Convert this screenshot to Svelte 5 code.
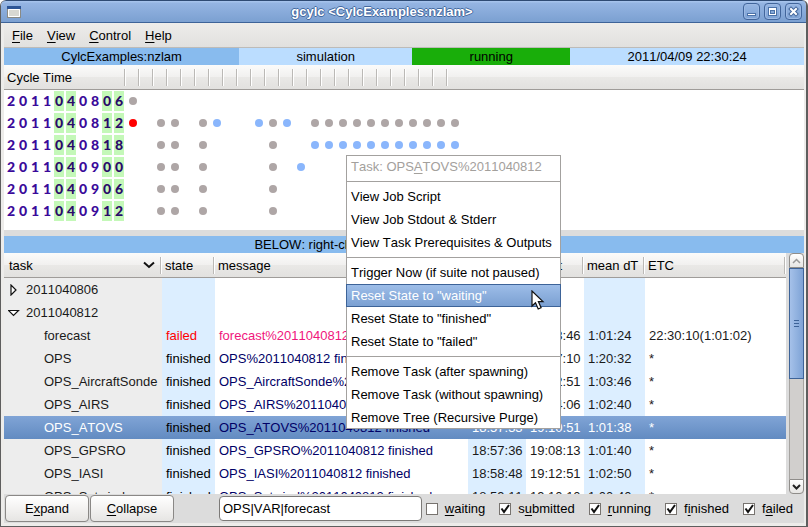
<script>
  const columns = Array.from({ length: 24 }, (_, i) => i);
  const late = Array.from({ length: 11 }, (_, i) => i + 13);
  const cycles = [
    { time: '2011040806', grey: [0], blue: [], red: [] },
    { time: '2011040812', grey: [2, 3, 5, 10, ...late], blue: [6, 9, 11], red: [0] },
    { time: '2011040818', grey: [2, 3, 5, 10], blue: late, red: [] },
    { time: '2011040900', grey: [2, 3, 5, 10], blue: [12], red: [] },
    { time: '2011040906', grey: [2, 3, 5, 10], blue: [], red: [] },
    { time: '2011040912', grey: [2, 3, 5, 10], blue: [], red: [] }
  ];
  const marked = [4, 5, 8, 9];

  function dot(cycle, i) {
    if (cycle.red.includes(i)) return 'red';
    if (cycle.blue.includes(i)) return 'blue';
    if (cycle.grey.includes(i)) return 'grey';
    return '';
  }

  const tasks = [
    { name: 'forecast', state: 'failed', message: 'forecast%2011040812 failed', submit: '21:29:08', start: '21:28:46', mean: '1:01:24', etc: '22:30:10(1:01:02)' },
    { name: 'OPS', state: 'finished', message: 'OPS%2011040812 finished', submit: '18:56:50', start: '19:17:10', mean: '1:20:32', etc: '*' },
    { name: 'OPS_AircraftSonde', state: 'finished', message: 'OPS_AircraftSonde%2011040812 finished', submit: '18:57:05', start: '19:12:51', mean: '1:03:46', etc: '*' },
    { name: 'OPS_AIRS', state: 'finished', message: 'OPS_AIRS%2011040812 finished', submit: '18:57:20', start: '19:14:06', mean: '1:02:40', etc: '*' },
    { name: 'OPS_ATOVS', state: 'finished', message: 'OPS_ATOVS%2011040812 finished', submit: '18:57:33', start: '19:10:51', mean: '1:01:38', etc: '*', selected: true },
    { name: 'OPS_GPSRO', state: 'finished', message: 'OPS_GPSRO%2011040812 finished', submit: '18:57:36', start: '19:08:13', mean: '1:01:40', etc: '*' },
    { name: 'OPS_IASI', state: 'finished', message: 'OPS_IASI%2011040812 finished', submit: '18:58:48', start: '19:12:51', mean: '1:02:50', etc: '*' },
    { name: 'OPS_Satwind', state: 'finished', message: 'OPS_Satwind%2011040812 finished', submit: '18:59:11', start: '19:10:10', mean: '1:00:40', etc: '*' }
  ];

  const filters = [
    { pre: '', key: 'w', post: 'aiting', on: false },
    { pre: 's', key: 'u', post: 'bmitted', on: true },
    { pre: '', key: 'r', post: 'unning', on: true },
    { pre: 'f', key: 'i', post: 'nished', on: true },
    { pre: 'f', key: 'a', post: 'iled', on: true }
  ];

  const groups = [
    ['View Job Script', 'View Job Stdout & Stderr', 'View Task Prerequisites & Outputs'],
    ['Trigger Now (if suite not paused)', 'Reset State to "waiting"', 'Reset State to "finished"', 'Reset State to "failed"'],
    ['Remove Task (after spawning)', 'Remove Task (without spawning)', 'Remove Tree (Recursive Purge)']
  ];
</script>

<div class="window">
  <header class="titlebar">
    <svg class="appicon" width="14" height="12" viewBox="0 0 14 12">
      <rect x=".5" y=".5" width="13" height="11" fill="#d8d8d2" stroke="#8a8a84" />
      <rect x="0" y="0" width="14" height="3" fill="#2c5596" />
      <path d="M1.500 10.500v-7h11v7z" fill="none" stroke="#fff" />
    </svg>
    <h1>gcylc &lt;CylcExamples:nzlam&gt;</h1>
    <div class="wbtns">
      <button aria-label="Minimize"><svg width="15" height="15"><rect x="3.500" y="9.500" width="8" height="2" fill="#fff" stroke="#4c72a8" /></svg></button>
      <button aria-label="Maximize"><svg width="15" height="15"><rect x="3.500" y="3.500" width="8" height="8" fill="#fff" stroke="#4c72a8" /><rect x="5.500" y="6.500" width="4" height="3" fill="#86a9d8" stroke="#4c72a8" /></svg></button>
      <button aria-label="Close"><svg width="15" height="15"><path d="M5 5l5 5M10 5l-5 5" stroke="#41659b" stroke-width="4" stroke-linecap="square" /><path d="M5 5l5 5M10 5l-5 5" stroke="#fff" stroke-width="2" stroke-linecap="square" /></svg></button>
    </div>
  </header>

  <div class="content">
    <nav class="menubar">
      <button><u>F</u>ile</button>
      <button><u>V</u>iew</button>
      <button><u>C</u>ontrol</button>
      <button><u>H</u>elp</button>
    </nav>

    <div class="status">
      <span class="suite">CylcExamples:nzlam</span>
      <span>simulation</span>
      <span class="running">running</span>
      <span>2011/04/09 22:30:24</span>
    </div>

    <div class="matrix">
      <table>
        <colgroup>
          <col class="c-time" />
          {#each columns as c}<col class={c < 23 ? 'c-dot' : ''} />{/each}
        </colgroup>
        <thead>
          <tr>
            <th>Cycle Time</th>
            {#each columns as c}<th></th>{/each}
          </tr>
        </thead>
        <tbody>
          {#each cycles as cycle}
            <tr>
              <td>
                <div class="digits">
                  {#each cycle.time as d, i}<span class:marked={marked.includes(i)}>{d}</span>{/each}
                </div>
              </td>
              {#each columns as c}
                <td>{#if dot(cycle, c)}<i class="dot {dot(cycle, c)}"></i>{/if}</td>
              {/each}
            </tr>
          {/each}
        </tbody>
      </table>
    </div>

    <div class="below">BELOW: right-click on tasks to control or interrogate</div>

    <div class="treebox">
      <div class="tree">
        <table>
          <colgroup>
            <col class="t-task" /><col class="t-state" /><col /><col class="t-time" /><col class="t-time" /><col class="t-mean" /><col class="t-etc" />
          </colgroup>
          <thead>
            <tr>
              <th>
                <div class="sort">task
                  <svg width="12" height="8" viewBox="0 0 12 8"><path d="M1 1.500L6 6l5-4.500" fill="none" stroke="#111" stroke-width="2" /></svg>
                </div>
              </th>
              <th>state</th><th>message</th><th>Tsubmit</th><th>Tstart</th><th>mean dT</th><th>ETC</th>
            </tr>
          </thead>
          <tbody>
            <tr>
              <td>
                <div class="parent"><svg width="12" height="12" viewBox="0 0 12 12"><path d="M3 1v10l5-5z" fill="#fff" stroke="#111" stroke-width="1.200" /></svg>2011040806</div>
              </td>
              <td></td><td></td><td></td><td></td><td></td><td></td>
            </tr>
            <tr>
              <td>
                <div class="parent"><svg width="12" height="12" viewBox="0 0 12 12"><path d="M-1 3.500H9l-5 5z" fill="#fff" stroke="#111" stroke-width="1.200" overflow="visible" transform="translate(1.500 0)" /></svg>2011040812</div>
              </td>
              <td></td><td></td><td></td><td></td><td></td><td></td>
            </tr>
            {#each tasks as t}
              <tr class:selected={t.selected} class:failed={t.state === 'failed'}>
                <td class="child">{t.name}</td>
                <td>{t.state}</td>
                <td>{t.message}</td>
                <td>{t.submit}</td>
                <td>{t.start}</td>
                <td>{t.mean}</td>
                <td>{t.etc}</td>
              </tr>
            {/each}
          </tbody>
        </table>
      </div>
      <div class="scrollbar">
        <button aria-label="Scroll up"><svg width="9" height="6"><path d="M1 5l3.500-3.500L8 5" fill="none" stroke="#999" stroke-width="1.500" /></svg></button>
        <div class="thumb"><i></i><i></i><i></i></div>
        <div class="track"></div>
        <button aria-label="Scroll down"><svg width="9" height="6"><path d="M1 1l3.500 3.500L8 1" fill="none" stroke="#222" stroke-width="2" /></svg></button>
      </div>
    </div>

    <footer>
      <button class="push">E<u>x</u>pand</button>
      <button class="push"><u>C</u>ollapse</button>
      <input class="filter" type="text" aria-label="Task filter" value="OPS|VAR|forecast" />
      <div class="checks">
        {#each filters as f}
          <label>
            <span class="box">
              <input type="checkbox" checked={f.on} />
              <svg width="12" height="12" viewBox="0 0 12 12"><path d="M2.500 5.500L5 9l5-7" fill="none" stroke="#111" stroke-width="2" /></svg>
            </span>
            <span>{f.pre}<u>{f.key}</u>{f.post}</span>
          </label>
        {/each}
      </div>
    </footer>
  </div>

  <div class="popup" role="menu">
    <div class="heading">Task: OPS<u>A</u>TOVS%2011040812</div>
    {#each groups as group}
      <hr />
      {#each group as item}
        <button role="menuitem" class:active={item.includes('waiting')}>{item}</button>
      {/each}
    {/each}
  </div>

  <svg class="pointer" width="14" height="21" viewBox="0 0 14 21">
    <path d="M1 1v15l3.500-3.300 2.700 6.300 2.900-1.200-2.700-6.200H12z" fill="#fff" stroke="#111" stroke-width="1.200" />
  </svg>
</div>

<style>
  :global(body) {
    background: #fff;
  }
  .window,
  .window button,
  .window input {
    font: 13px/17px "Liberation Sans", Arial, sans-serif;
    font-kerning: none;
    color: #000;
  }
  .window {
    position: relative;
    display: flex;
    flex-direction: column;
    box-sizing: border-box;
    height: 100vh;
    border: 1px solid #5e5e5e;
    border-right-width: 2px;
    border-top: 0;
    border-radius: 6px 6px 0 0;
    background: #edecea;
    overflow: hidden;
  }
  .window button {
    margin: 0;
    padding: 0;
    border: 0;
    background: none;
  }
  u {
    text-underline-offset: 2px;
  }

  .titlebar {
    display: flex;
    align-items: center;
    box-sizing: border-box;
    flex: none;
    height: 23px;
    margin: 0 -2px 0 -1px;
    padding: 0 6px 0 7px;
    border: 1px solid #3d6398;
    border-top-color: #2e4a73;
    border-width: 1px 0;
    border-radius: 6px 6px 0 0;
    background: linear-gradient(#a9c6ee, #94b4e2 12%, #7ba0d1);
  }
  .appicon {
    flex: none;
  }
  h1 {
    flex: 1;
    margin: 0;
    font-size: 13px;
    line-height: 17px;
    text-align: center;
    color: #fff;
    text-shadow: 1px 0 #44699f, -1px 0 #44699f, 0 1px #44699f, 0 -1px #44699f;
  }
  .wbtns {
    display: flex;
    gap: 4px;
  }
  .wbtns button {
    width: 17px;
    height: 17px;
    border: 1px solid #41659b;
    border-radius: 4px;
    background: linear-gradient(#96b6e3, #7ea2d4);
    box-shadow: inset 0 0 0 1px #9dbae4;
  }
  .wbtns svg {
    display: block;
  }

  .content {
    display: flex;
    flex-direction: column;
    flex: 1;
    min-height: 0;
    margin: 0 2px 3px 3px;
    background: #dcdcdc;
  }
  .menubar {
    display: flex;
    gap: 14px;
    box-sizing: border-box;
    height: 25px;
    padding: 0 8px;
    border-bottom: 1px solid #bdbbb8;
    background: linear-gradient(#edecea, #e1e0de);
  }
  .status {
    display: flex;
    height: 17px;
  }
  .status span {
    flex: 1 1 auto;
    text-align: center;
    background: #bbddff;
  }
  .status .suite {
    background: #88bbee;
  }
  .status .running {
    background: #19ae0a;
  }

  table {
    width: 100%;
    table-layout: fixed;
    border-collapse: separate;
    border-spacing: 0;
  }
  th,
  td {
    padding: 0;
    text-align: left;
    white-space: nowrap;
    font-weight: normal;
  }
  th {
    box-sizing: border-box;
    height: 25px;
    border-bottom: 1px solid #9f9c99;
    background:
      linear-gradient(#bbb9b6, #bbb9b6) right 1px top 4px / 1px 17px no-repeat,
      linear-gradient(#fff, #fff) right 0 top 4px / 1px 17px no-repeat,
      linear-gradient(#fbfbfa, #f1f0ef 50%, #e9e8e6 52%, #e2e1df);
  }

  .matrix {
    padding-bottom: 8px;
    background: #fff;
  }
  .matrix th {
    padding-left: 3px;
  }
  .matrix th:last-child {
    background: linear-gradient(#fbfbfa, #f1f0ef 50%, #e9e8e6 52%, #e2e1df);
  }
  .c-time {
    width: 122px;
  }
  .c-dot {
    width: 14px;
  }
  .matrix td {
    height: 22px;
  }
  .digits {
    display: flex;
    gap: 2px;
    padding-left: 2px;
    font: 900 14px/20px Lato, "Liberation Sans", sans-serif;
    color: #3a0a9a;
  }
  .digits span {
    width: 10px;
    text-align: center;
  }
  .digits .marked {
    background: #c4f8b8;
    color: #2a0a6a;
  }
  .dot {
    display: block;
    width: 8px;
    height: 8px;
    margin-left: 3px;
    border-radius: 50%;
  }
  .dot.grey {
    background: #aea6a6;
  }
  .dot.blue {
    background: #8ab6fc;
  }
  .dot.red {
    background: #f00;
  }

  .below {
    height: 17px;
    margin-top: 6px;
    background: #88bbee;
    text-align: center;
  }

  .treebox {
    display: flex;
    flex: 1;
    gap: 3px;
    min-height: 0;
  }
  .tree {
    flex: 1;
    overflow: hidden;
    background: #fff;
  }
  .tree th {
    padding-left: 3px;
  }
  .tree th:first-child {
    padding-left: 5px;
  }
  .t-task {
    width: 158px;
  }
  .t-state {
    width: 53px;
  }
  .t-time {
    width: 58px;
  }
  .t-mean {
    width: 61px;
  }
  .t-etc {
    width: 141px;
  }
  .sort {
    display: flex;
    align-items: center;
    justify-content: space-between;
    padding-right: 7px;
  }
  .tree td {
    height: 23px;
    padding-left: 4px;
    overflow: hidden;
    color: #1a1a1a;
  }
  .tree td:nth-child(even) {
    background: #dceeff;
  }
  .tree td:first-child {
    background: #ededed;
  }
  .tree td:nth-child(2) {
    color: #000;
  }
  .tree td:nth-child(3) {
    color: #000066;
  }
  .tree .failed td:nth-child(2) {
    color: #f00;
  }
  .tree .failed td:nth-child(3) {
    color: #f0157c;
  }
  .tree td.child {
    padding-left: 40px;
  }
  .tree .selected td,
  .tree .selected td:first-child {
    background: linear-gradient(#80a4d6, #628bc1);
  }
  .tree .selected td:not(:nth-child(2)):not(:nth-child(3)) {
    color: #fff;
  }
  .parent {
    display: flex;
    align-items: center;
    gap: 6px;
  }

  .scrollbar {
    display: flex;
    flex-direction: column;
    width: 15px;
  }
  .scrollbar button {
    display: grid;
    place-items: center;
    box-sizing: border-box;
    height: 15px;
    border: 1px solid #8f8d8a;
    border-radius: 4px 4px 0 0;
    background: linear-gradient(#fff, #e6e5e3);
  }
  .scrollbar button:last-child {
    border-radius: 0 0 4px 4px;
  }
  .thumb {
    display: flex;
    flex-direction: column;
    align-items: center;
    justify-content: center;
    gap: 2px;
    box-sizing: border-box;
    flex: 110 1 0;
    border: 1px solid #3d6398;
    background: linear-gradient(90deg, #a5c1e9, #7ea3d6);
  }
  .thumb i {
    width: 5px;
    height: 1px;
    background: #3d6398;
  }
  .track {
    box-sizing: border-box;
    flex: 101 1 0;
    border: 1px solid #a5a3a0;
    border-width: 0 1px;
    background: #d1cfcd;
  }

  footer {
    display: flex;
    align-items: center;
    flex: none;
    gap: 1px;
    height: 29px;
    padding: 0 11px 0 1px;
  }
  footer .push {
    box-sizing: border-box;
    width: 84px;
    height: 27px;
    border: 1px solid #8a8886;
    border-radius: 4px;
    background: linear-gradient(#fff, #f3f2f1 50%, #e6e5e3);
  }
  .filter {
    box-sizing: border-box;
    flex: 1;
    min-width: 0;
    height: 25px;
    margin: 0 3px 0 44px;
    padding: 0 3px;
    border: 1px solid #7c7a78;
    border-radius: 4px;
    background: #fff;
  }
  .checks {
    display: flex;
    gap: 14px;
  }
  .checks label {
    display: flex;
    align-items: center;
    gap: 7px;
  }
  .box {
    position: relative;
    width: 12px;
    height: 12px;
  }
  .box input {
    appearance: none;
    display: block;
    box-sizing: border-box;
    width: 12px;
    height: 12px;
    margin: 0;
    border: 1px solid #77736f;
    background: #fff;
  }
  .box svg {
    position: absolute;
    inset: 0;
    visibility: hidden;
    pointer-events: none;
  }
  .box input:checked + svg {
    visibility: visible;
  }

  .popup {
    position: absolute;
    left: 345px;
    top: 155px;
    display: flex;
    flex-direction: column;
    width: 215px;
    background: #fff;
    box-shadow: inset 0 0 0 1px #a3a19f;
  }
  .popup .heading,
  .popup button {
    box-sizing: border-box;
    height: 23px;
    padding: 3px 5px;
    text-align: left;
    white-space: nowrap;
  }
  .popup .heading {
    color: #a3a09c;
  }
  .popup hr {
    width: 100%;
    height: 1px;
    margin: 3px 0;
    border: 0;
    background: #a3a19f;
  }
  .popup .active {
    border: 1px solid #3d6398;
    padding: 2px 4px;
    background: linear-gradient(#9dbde8, #7ba0d2);
    color: #fff;
  }
  .pointer {
    position: absolute;
    left: 530px;
    top: 290px;
  }
</style>
